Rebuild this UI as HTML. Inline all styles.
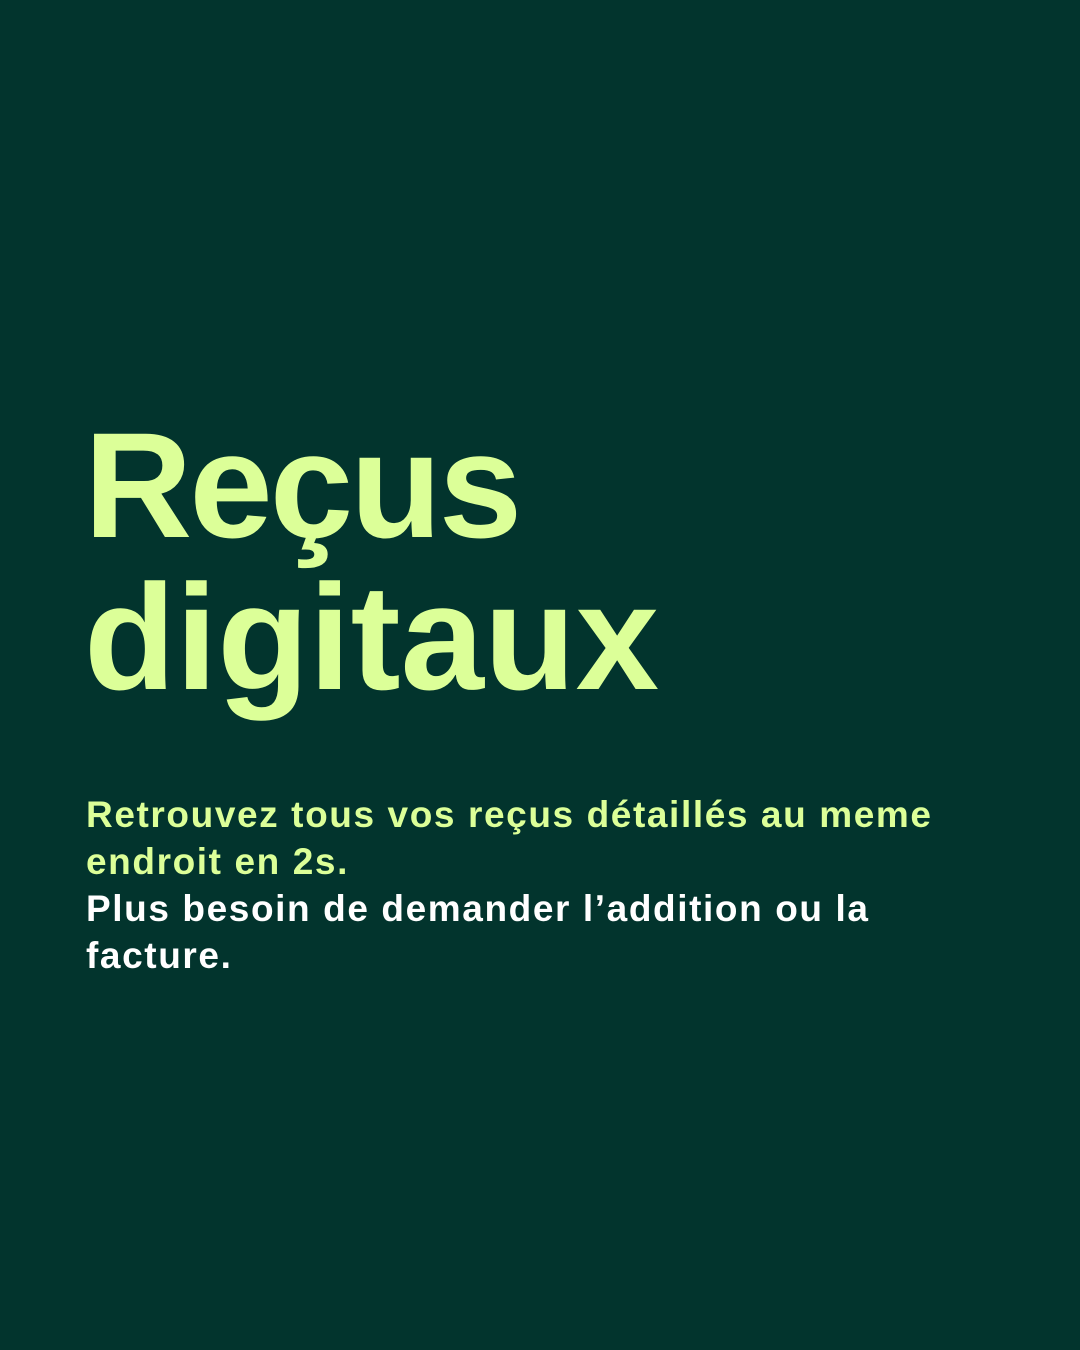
<!DOCTYPE html>
<html><head><meta charset="utf-8"><style>
html,body{margin:0;padding:0}
body{width:1080px;height:1350px;background:#02342d;position:relative;overflow:hidden;font-family:"Liberation Sans",sans-serif;font-weight:bold}
.t{position:absolute;left:84px;top:409px;font-size:150px;line-height:152px;color:#dcff98;letter-spacing:-3px}
.t span{letter-spacing:0}
.b{position:absolute;left:86px;top:791px;font-size:37px;line-height:47px;width:990px;letter-spacing:1.6px}
.g{color:#dcff98}.w{color:#fff}
</style></head><body>
<div class="t">Reçus<br><span>digitaux</span></div>
<div class="b"><span class="g">Retrouvez tous vos reçus détaillés au meme<br>endroit en 2s.</span><br><span class="w">Plus besoin de demander l’addition ou la<br>facture.</span></div>
</body></html>
